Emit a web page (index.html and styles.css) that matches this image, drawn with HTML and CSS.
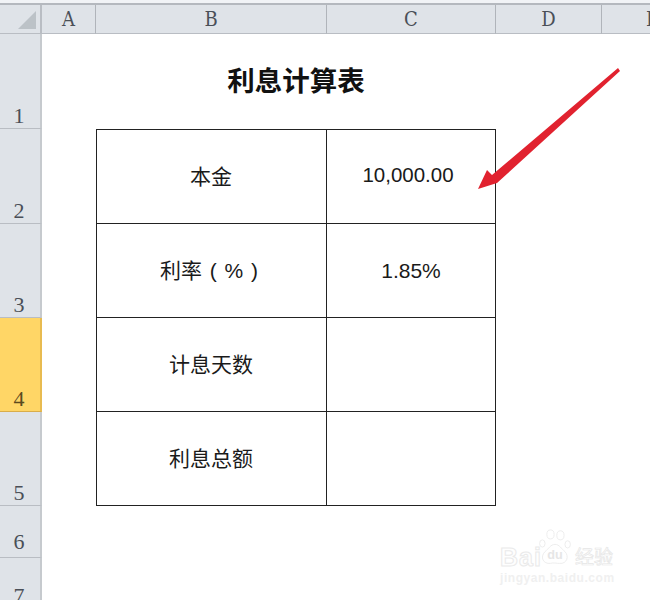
FILE: index.html
```html
<!DOCTYPE html>
<html lang="zh-CN">
<head>
  <meta charset="UTF-8" />
  <title>利息计算表</title>
  <link rel="stylesheet" href="styles.css">
</head>
<body>
  <div class="sheet">
    <div class="top-strip"></div>

    <div class="corner"><span class="corner-mark"></span></div>
    <div class="col-head">A</div>
    <div class="col-head">B</div>
    <div class="col-head">C</div>
    <div class="col-head">D</div>
    <div class="col-head col-cut">E</div>

    <div class="row-head r1">1</div>
    <div class="row-head r2">2</div>
    <div class="row-head r3">3</div>
    <div class="row-head r4 selected">4</div>
    <div class="row-head r5">5</div>
    <div class="row-head r6">6</div>
    <div class="row-head r7">7</div>

    <div class="title">利息计算表</div>

    <div class="cell r2 col-b top left">本金</div>
    <div class="cell r2 col-c top">10,000.00</div>
    <div class="cell r3 col-b left rate">利率 ( % )</div>
    <div class="cell r3 col-c pct">1.85%</div>
    <div class="cell r4 col-b left">计息天数</div>
    <div class="cell r4 col-c"></div>
    <div class="cell r5 col-b left">利息总额</div>
    <div class="cell r5 col-c"></div>
  </div>

  <svg class="arrow" width="650" height="600" viewBox="0 0 650 600">
    <polygon points="478,189 487,170 492,175 618,68 620,71 497,183" fill="#e1222f" />
  </svg>

  <div class="watermark">
    <span class="wm-bai">Bai</span>
    <svg class="wm-paw" width="36" height="38" viewBox="0 0 36 42">
      <g fill="#fff" stroke="#ebebeb" stroke-width="1">
        <ellipse cx="4" cy="16" rx="3" ry="4" />
        <ellipse cx="13" cy="6" rx="4" ry="5" />
        <ellipse cx="24" cy="7" rx="4" ry="5" />
        <ellipse cx="32" cy="17" rx="3" ry="4" />
        <path d="M18 17c5 0 7 5 11 8 5 5 2 14-6 13-3 0-7-1-10 0-8 1-12-7-6-13 4-3 6-8 11-8z" />
      </g>
      <text x="18" y="33" text-anchor="middle" class="wm-du">du</text>
    </svg>
    <span class="wm-cn">经验</span>
    <span class="wm-url">jingyan.baidu.com</span>
  </div>
</body>
</html>
```

FILE: styles.css
```css
* { box-sizing: border-box; margin: 0; padding: 0; }

body {
  width: 650px;
  height: 600px;
  overflow: hidden;
  background: #fff;
  position: relative;
  font-family: "Liberation Sans", "Noto Sans CJK SC", sans-serif;
}

.sheet {
  display: grid;
  grid-template-columns: 42px 54px 231px 169px 106px 48px;
  grid-template-rows: 5px 29px 95px 95px 94px 94px 94px 52px 42px;
  width: 650px;
  height: 600px;
}

.top-strip {
  grid-column: 1 / -1;
  background: #f1f3f6;
  border-bottom: 2px solid #b4b8be;
}

.corner {
  background: #dfe3e8;
  border-right: 2px solid #b9bdc3;
  border-bottom: 1px solid #b9bdc3;
  position: relative;
}
.corner-mark {
  position: absolute;
  right: 4px;
  bottom: 4px;
  border-style: solid;
  border-width: 0 0 18px 18px;
  border-color: transparent transparent #bcc2c7 transparent;
}

.col-head {
  background: #dfe3e8;
  border-right: 1px solid #b0b4ba;
  border-bottom: 1px solid #b9bdc3;
  display: flex;
  align-items: center;
  justify-content: center;
  font-family: "DejaVu Serif Condensed", "Liberation Serif", serif;
  font-size: 20px;
  color: #4a4f57;
}
.col-cut {
  justify-content: flex-start;
  padding-left: 44px;
  border-right: none;
}

.row-head {
  grid-column: 1;
  background: #dfe3e8;
  border-right: 2px solid #c6cace;
  border-bottom: 1px solid #b9bdc3;
  display: flex;
  align-items: flex-end;
  justify-content: center;
  padding-right: 2px;
  font-family: "Liberation Serif", serif;
  font-size: 22px;
  line-height: 25px;
  color: #4a4f57;
}
.selected {
  background: #ffd666;
  border-right-color: #e8bb50;
  border-bottom-color: #d9ad4a;
  color: #5c4a1e;
}

.r1 { grid-row: 3; }
.r2 { grid-row: 4; }
.r3 { grid-row: 5; }
.r4 { grid-row: 6; }
.r5 { grid-row: 7; }
.r6 { grid-row: 8; line-height: 30px; }
.r7 { grid-row: 9; align-items: flex-start; padding-top: 25px; border-bottom: none; }

.title {
  grid-column: 3 / 5;
  grid-row: 3;
  display: flex;
  align-items: center;
  justify-content: center;
  margin-top: -6px;
  font-size: 27.5px;
  font-weight: 700;
  color: #111;
}

.cell {
  display: flex;
  align-items: center;
  justify-content: center;
  border-right: 1px solid #222;
  border-bottom: 1px solid #222;
  font-size: 20.5px;
  color: #1a1a1a;
  padding-bottom: 4px;
}
.col-b { grid-column: 3; font-size: 21px; padding-right: 1px; }
.col-c { grid-column: 4; padding-right: 6px; }
.top { border-top: 1px solid #222; }
.left { border-left: 1px solid #222; }
.rate { word-spacing: 2px; white-space: pre; padding-right: 5px; }
.pct { padding-right: 0; padding-bottom: 0; font-size: 21px; }

.arrow {
  position: absolute;
  left: 0;
  top: 0;
}

.watermark {
  position: absolute;
  left: 498px;
  top: 529px;
  width: 120px;
  height: 54px;
}
.wm-bai {
  position: absolute;
  left: 2px;
  top: 14px;
  font-size: 25px;
  font-weight: 700;
  letter-spacing: 1px;
  color: #fefefe;
  -webkit-text-stroke: 1px #eaeaea;
}
.wm-paw {
  position: absolute;
  left: 39px;
  top: 0;
}
.wm-du {
  font-family: "Liberation Sans", sans-serif;
  font-size: 14px;
  font-weight: 700;
  fill: #e6e6e6;
}
.wm-cn {
  position: absolute;
  left: 77px;
  top: 18px;
  font-size: 19px;
  line-height: 22px;
  color: #fefefe;
  -webkit-text-stroke: 0.7px #e6e6e6;
}
.wm-url {
  position: absolute;
  left: 2px;
  top: 42px;
  font-size: 12px;
  font-weight: 700;
  letter-spacing: 0.55px;
  color: #f0f0f0;
  white-space: nowrap;
}
```
